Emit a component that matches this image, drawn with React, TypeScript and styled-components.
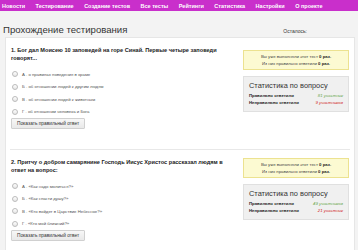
import React from "react";
import styled, { createGlobalStyle } from "styled-components";

const Global = createGlobalStyle`
  html, body { margin: 0; padding: 0; background: #f3f3f3; }
  body { font-family: "Liberation Sans", Arial, sans-serif; color: #222; }
`;

const Nav = styled.nav`
  display: flex;
  align-items: center;
  gap: 10.5px;
  height: 11px;
  padding-left: 2px;
  background: #c92fcb;
`;

const NavItem = styled.span`
  color: #fff;
  font-size: 5.5px;
  font-weight: bold;
  white-space: nowrap;
`;

const Header = styled.header`
  display: flex;
  align-items: flex-end;
  height: 25px;
  padding: 0 3px;
`;

const Title = styled.h1`
  margin: 0 0 1px;
  font-size: 9.6px;
  font-weight: normal;
  color: #333;
  flex: 1;
`;

const Remaining = styled.span`
  font-size: 5px;
  color: #333;
  margin-right: 48px;
  margin-bottom: 2px;
`;

const Panel = styled.main`
  margin: 1px 3px 0 5px;
  background: #fff;
  border: 1px solid #e6e6e6;
  border-bottom: none;
  padding: 0 4px;
  min-height: 220px;
`;

const Question = styled.section<{ $last?: boolean }>`
  display: grid;
  grid-template-columns: 1fr 106px;
  column-gap: 8px;
  padding: 8px 1px 20px;
  border-bottom: ${(p) => (p.$last ? "none" : "1px solid #e8e8e8")};
`;

const QText = styled.div`
  font-size: 5.6px;
  font-weight: bold;
  line-height: 8px;
  color: #222;
  padding-right: 8px;
`;

const Options = styled.ul`
  list-style: none;
  margin: 6px 0 0;
  padding: 0;
`;

const Option = styled.li`
  display: flex;
  align-items: center;
  height: 12.5px;
  padding-left: 1px;
  font-size: 4.3px;
  color: #555;
`;

const Radio = styled.span`
  width: 4px;
  height: 4px;
  border-radius: 50%;
  border: 0.5px solid #bbb;
  background: linear-gradient(#fff, #e6e6e6);
  margin-right: 4px;
  flex: none;
`;

const Button = styled.button`
  display: block;
  height: 11px;
  padding: 0 5px;
  font-family: inherit;
  font-size: 4.8px;
  color: #333;
  background: linear-gradient(#f7f7f7, #e9e9e9);
  border: 0.5px solid #d0d0d0;
  border-radius: 1px;
`;

const Side = styled.aside<{ $top: number }>`
  display: flex;
  flex-direction: column;
  gap: 6px;
  margin-top: ${(p) => p.$top}px;
`;

const Notice = styled.div`
  background: #fcfad2;
  border: 1px solid #ece290;
  height: 20px;
  box-sizing: border-box;
  display: flex;
  flex-direction: column;
  justify-content: center;
  align-items: center;
  font-size: 4.3px;
  line-height: 7px;
  color: #444;
  b { color: #222; }
`;

const Stats = styled.div`
  background: #f0f0f0;
  border: 1px solid #e0e0e0;
  height: 36px;
  box-sizing: border-box;
  padding: 3px 5px 0;
`;

const StatsTitle = styled.div`
  font-size: 7.4px;
  color: #333;
  line-height: 11px;
  margin-bottom: 2px;
`;

const StatRow = styled.div`
  display: flex;
  justify-content: space-between;
  font-size: 4.3px;
  line-height: 6.5px;
  color: #222;
  font-weight: bold;
`;

const Val = styled.span<{ $ok: boolean }>`
  font-weight: normal;
  font-style: italic;
  color: ${(p) => (p.$ok ? "#6aa84f" : "#d02a2a")};
`;

type Q = {
  text: string;
  options: string[];
  ok: string;
  bad: string;
  top: number;
};

const questions: Q[] = [
  {
    text: "1. Бог дал Моисею 10 заповедей на горе Синай. Первые четыре заповеди говорят...",
    options: [
      "А . о правилах поведения в храме",
      "Б . об отношении людей к другим людям",
      "В . об отношении людей к животным",
      "Г . об отношении человека и Бога",
    ],
    ok: "81 участник",
    bad: "9 участников",
    top: 4,
  },
  {
    text: "2. Притчу о добром самарянине Господь Иисус Христос рассказал людям в ответ на вопрос:",
    options: [
      "А . «Как надо молиться?»",
      "Б . «Как спасти душу?»",
      "В . «Кто войдет в Царствие Небесное?»",
      "Г . «Кто мой ближний?»",
    ],
    ok: "49 участников",
    bad: "21 участник",
    top: 0,
  },
];

const navItems = [
  "Новости",
  "Тестирование",
  "Создание тестов",
  "Все тесты",
  "Рейтинги",
  "Статистика",
  "Настройки",
  "О проекте",
];

export default function App() {
  return (
    <>
      <Global />
      <Nav>
        {navItems.map((n) => (
          <NavItem key={n}>{n}</NavItem>
        ))}
      </Nav>
      <Header>
        <Title>Прохождение тестирования</Title>
        <Remaining>Осталось:</Remaining>
      </Header>
      <Panel>
        {questions.map((q, i) => (
          <Question key={i} $last={i === questions.length - 1}>
            <div>
              <QText>{q.text}</QText>
              <Options>
                {q.options.map((o) => (
                  <Option key={o}>
                    <Radio />
                    {o}
                  </Option>
                ))}
              </Options>
              <Button>Показать правильный ответ</Button>
            </div>
            <Side $top={q.top}>
              <Notice>
                <span>
                  Вы уже выполняли этот тест <b>0 раз.</b>
                </span>
                <span>
                  Из них правильно ответили <b>0 раз.</b>
                </span>
              </Notice>
              <Stats>
                <StatsTitle>Статистика по вопросу</StatsTitle>
                <StatRow>
                  <span>Правильно ответили</span>
                  <Val $ok>{q.ok}</Val>
                </StatRow>
                <StatRow>
                  <span>Неправильно ответили</span>
                  <Val $ok={false}>{q.bad}</Val>
                </StatRow>
              </Stats>
            </Side>
          </Question>
        ))}
      </Panel>
    </>
  );
}
